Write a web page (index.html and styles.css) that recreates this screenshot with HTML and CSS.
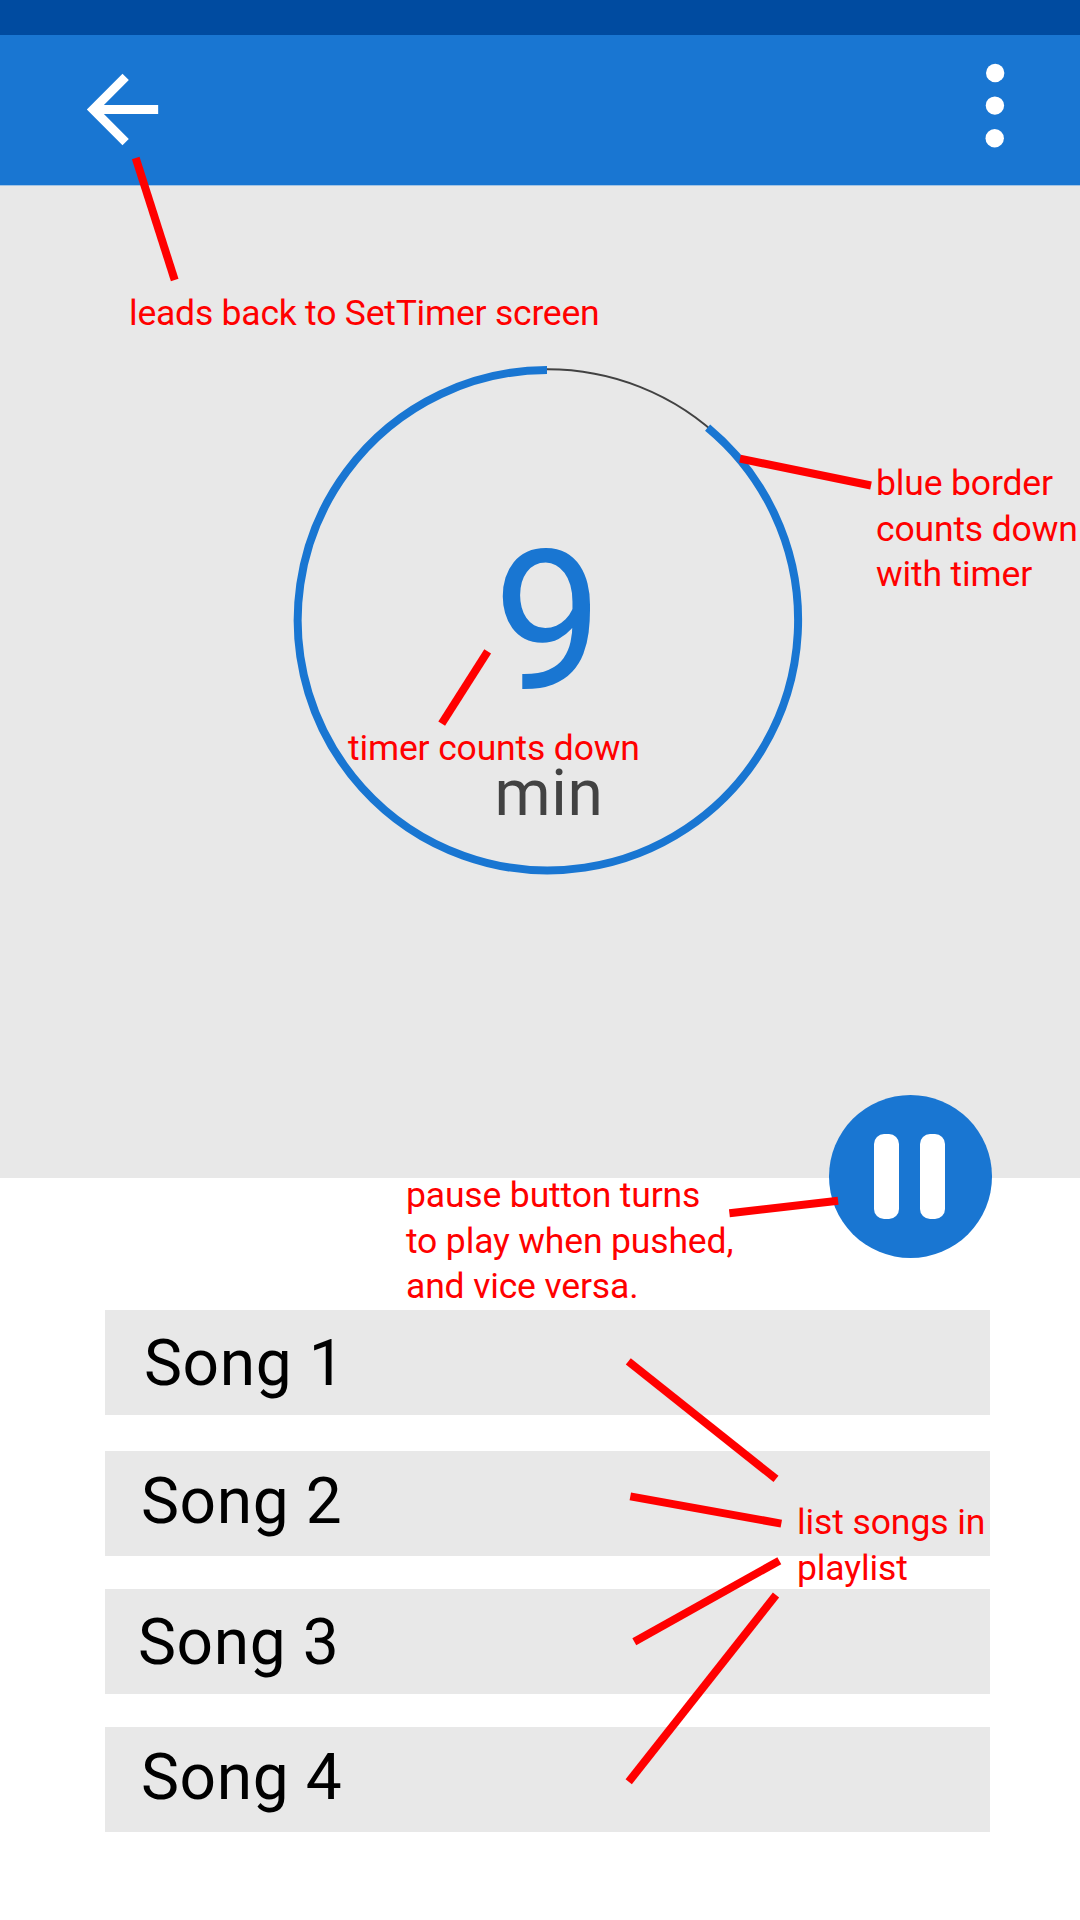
FILE: index.html
```html
<!DOCTYPE html>
<html lang="en">
<head>
<meta charset="utf-8">
<title>Timer</title>
<link rel="stylesheet" href="styles.css">
</head>
<body>
<div class="screen">
  <div class="status-bar"></div>
  <header class="app-bar">
    <svg class="back-icon" viewBox="0 0 24 24"><path d="M20 11H7.83l5.59-5.59L12 4l-8 8 8 8 1.41-1.41L7.83 13H20v-2z"/></svg>
    <svg class="menu-icon" viewBox="0 0 20 86"><circle cx="10.2" cy="10" r="9.2"/><circle cx="9.9" cy="42.6" r="9.2"/><circle cx="9.7" cy="75.2" r="9.2"/></svg>
  </header>

  <main class="timer-panel">
    <div class="dial">
      <svg class="dial-ring" viewBox="0 0 510 510">
        <circle class="dial-track" cx="254.5" cy="255.2" r="251"/>
        <path class="dial-progress" d="M414.6 62.6A250.2 250.2 0 1 1 254 5"/>
      </svg>
      <div class="dial-value">9</div>
      <div class="dial-unit">min</div>
    </div>
    <button class="pause-button" aria-label="Pause"><span class="pause-bar"></span><span class="pause-bar"></span></button>
  </main>

  <ul class="playlist">
    <li class="song song-1">Song 1</li>
    <li class="song song-2">Song 2</li>
    <li class="song song-3">Song 3</li>
    <li class="song song-4">Song 4</li>
  </ul>

  <svg class="pointers" viewBox="0 0 1080 1920">
    <path d="M135.7 158L174.7 280"/>
    <path d="M740 458.7L871 485.5"/>
    <path d="M487.7 651.3L441.7 723.7"/>
    <path d="M729.4 1213.3L838.1 1200.7"/>
    <path d="M628.3 1361.4L776 1478.9"/>
    <path d="M630.3 1496.4L781.3 1523.6"/>
    <path d="M634.3 1641.8L779.3 1560.7"/>
    <path d="M628.7 1781.8L776 1595"/>
  </svg>
  <p class="note note-back">leads back to SetTimer screen</p>
  <p class="note note-border">blue border<br>counts down<br>with timer</p>
  <p class="note note-timer">timer counts down</p>
  <p class="note note-pause">pause button turns<br>to play when pushed,<br>and vice versa.</p>
  <p class="note note-list">list songs in<br>playlist</p>
</div>
</body>
</html>
```
FILE: styles.css
```css
* { box-sizing: border-box; }
body { margin: 0; background: #fff; font-family: Roboto, sans-serif; }
.screen { position: relative; width: 1080px; height: 1920px; overflow: hidden; background: #fff; }

.status-bar { height: 35px; background: #004ba0; }
.app-bar {
  display: flex;
  justify-content: space-between;
  align-items: flex-start;
  height: 151px;
  padding: 21px 75px 0 69px;
  background: #1976d2;
  border-bottom: 1px solid #a2c4e5;
}
.back-icon { width: 107px; height: 107px; fill: #fff; }
.menu-icon { width: 20px; height: 86px; margin-top: 6.5px; fill: #fff; }

.timer-panel {
  position: relative;
  height: 992px;
  padding: 179px 0 0 293px;
  background: #e8e8e8;
}
.dial { position: relative; display: flex; flex-direction: column; align-items: center; width: 510px; height: 510px; }
.dial-ring { position: absolute; inset: 0; width: 510px; height: 510px; fill: none; }
.dial-track { stroke: #424242; stroke-width: 2; }
.dial-progress { stroke: #1976d2; stroke-width: 8; }
.dial-value { margin-top: 144px; font-size: 195px; line-height: 228px; color: #1976d2; }
.dial-unit { margin-top: 19px; padding-left: 2px; font-size: 64px; line-height: 76px; letter-spacing: 0.6px; color: #424242; }

.pause-button {
  position: absolute;
  right: 88px;
  bottom: -80px;
  display: flex;
  justify-content: center;
  align-items: center;
  gap: 21px;
  width: 163px;
  height: 163px;
  padding: 0 2px 0 0;
  border: 0;
  border-radius: 50%;
  background: #1976d2;
}
.pause-bar { width: 25px; height: 85px; border-radius: 10px; background: #fff; }

.playlist { display: flex; flex-direction: column; gap: 33px; margin: 0; padding: 132px 90px 0 105px; list-style: none; }
.song { height: 105px; background: #e8e8e8; font-size: 64px; line-height: 76px; letter-spacing: 0.6px; color: #000; }
.song-1 { margin-bottom: 3px; padding: 16px 0 0 39px; }
.song-2 { padding: 13px 0 0 36px; }
.song-3 { padding: 16px 0 0 33px; }
.song-4 { padding: 13px 0 0 36px; }

.pointers { position: absolute; inset: 0; width: 1080px; height: 1920px; fill: none; stroke: #f00; stroke-width: 8; }
.note { position: absolute; margin: 0; font-size: 35.5px; line-height: 45.5px; letter-spacing: -0.15px; white-space: nowrap; color: #f00; }
.note-back { left: 129px; top: 291px; letter-spacing: -0.22px; }
.note-border { left: 876px; top: 461px; }
.note-timer { left: 348px; top: 726px; }
.note-pause { left: 406px; top: 1173px; }
.note-list { left: 797px; top: 1500px; letter-spacing: -0.1px; }
```
